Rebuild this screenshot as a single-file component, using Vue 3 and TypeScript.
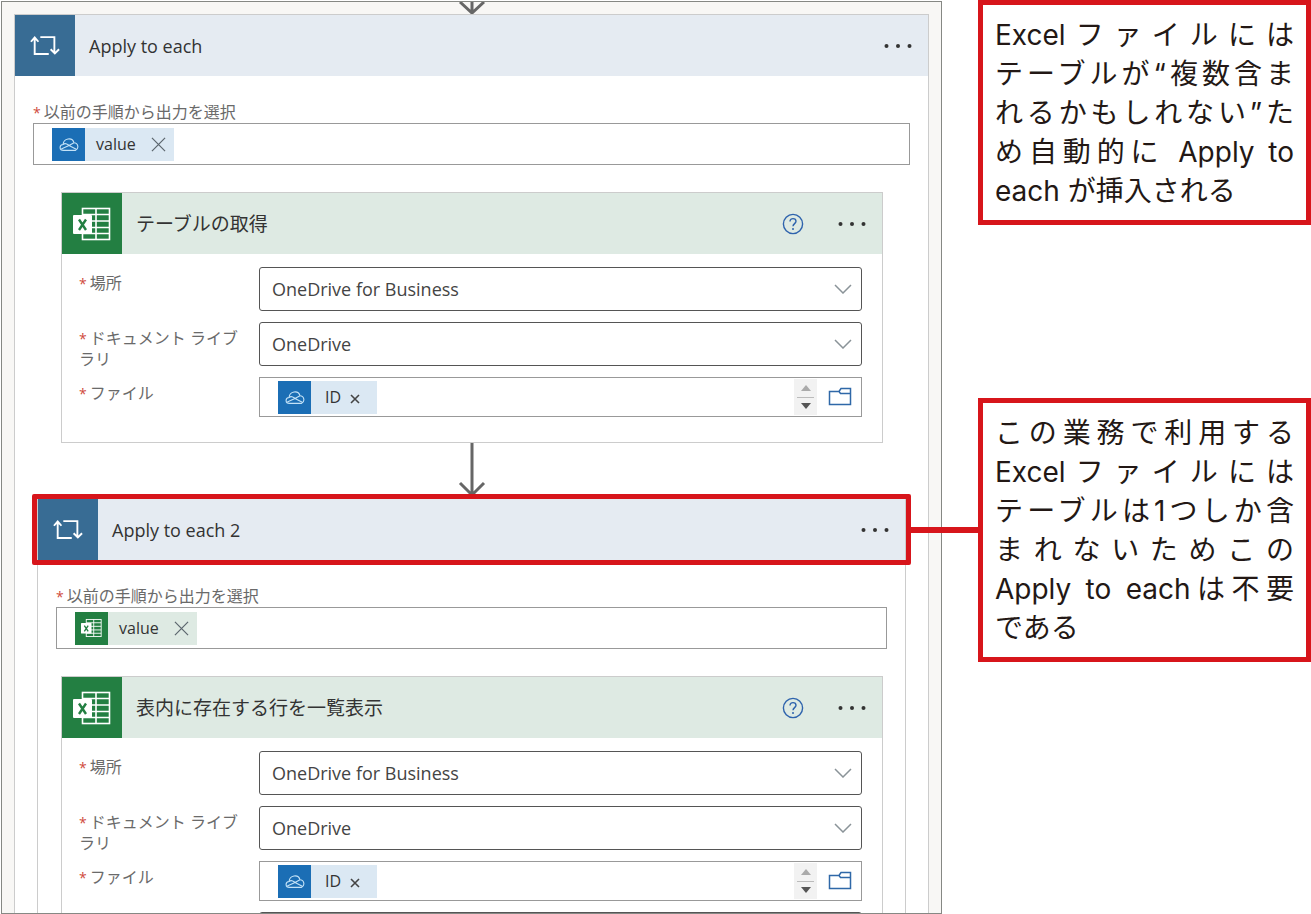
<script setup lang="ts">
interface Field {
  id: string
  label: string
  kind: 'select' | 'file'
  value: string
}

const baseFields = (prefix: string): Field[] => [
  { id: `${prefix}-location`, label: '場所', kind: 'select', value: 'OneDrive for Business' },
  { id: `${prefix}-library`, label: 'ドキュメント ライブラリ', kind: 'select', value: 'OneDrive' },
  { id: `${prefix}-file`, label: 'ファイル', kind: 'file', value: 'ID' },
]

const getTables: Field[] = baseFields('tables')
const listRows: Field[] = baseFields('rows')

const notes: string[][] = [
  ['Excelファイルには', 'テーブルが“複数含ま', 'れるかもしれない”た', 'め自動的に Apply to', 'each が挿入される'],
  ['この業務で利用する', 'Excelファイルには', 'テーブルは1つしか含', 'まれないためこの', 'Apply to eachは不要', 'である'],
]
</script>

<template>
  <svg class="defs" aria-hidden="true">
    <symbol id="i-loop" viewBox="0 0 32 24">
      <g fill="none" stroke="#fff" stroke-width="2">
        <path d="M5 3.500V21H20M1 8l4-4.500 4 4.500" />
        <path d="M11 3H26V20M22 16l4.500 4.500L31 16" />
      </g>
    </symbol>
    <symbol id="i-excel" viewBox="0 0 38 34">
      <g fill="none" stroke="#fff" stroke-width="1.600">
        <rect x="9.500" y="1.500" width="27" height="31" />
        <path d="M23 1.500V32.500M9.500 7.500H36.500M9.500 14H36.500M9.500 20.500H36.500M9.500 26.500H36.500" />
      </g>
      <rect x="0" y="8" width="19" height="19" rx="1" fill="#fff" />
      <path d="M6 12.500l7 10.500M13 12.500L6 23" stroke="#237f42" stroke-width="2.400" fill="none" />
    </symbol>
    <symbol id="i-cloud" viewBox="0 0 22 16">
      <g fill="none" stroke="#c3e2f7" stroke-width="1.200" stroke-linejoin="round">
        <path d="M5 14.500C0 14.500 0 8.500 4.500 8C5 1 14.500-.5 16.500 6C21 6 22.500 12.500 18 14.500Z" />
        <path d="M4.500 8C7 5.500 9 7.500 11 9L19.500 13.500M2.500 13L11 9L16.500 6" />
      </g>
    </symbol>
    <symbol id="i-folder" viewBox="0 0 24 20">
      <path d="M1.500 4.500H11L13 1.500H22.500V17.500H1.500ZM11 4.500L12.500 6.500H22.500" fill="none" stroke="#2f68a8" stroke-width="1.500" />
    </symbol>
    <symbol id="i-close" viewBox="0 0 16 16">
      <path d="M1 1L15 15M15 1L1 15" fill="none" stroke="#5c666e" stroke-width="1.300" />
    </symbol>
    <symbol id="i-close-small" viewBox="0 0 10 10">
      <path d="M1 1L9 9M9 1L1 9" fill="none" stroke="#444" stroke-width="1.600" />
    </symbol>
    <symbol id="i-help" viewBox="0 0 22 22">
      <circle cx="11" cy="11" r="9.600" fill="none" stroke="#2e63ad" stroke-width="1.400" />
      <path d="M8 8.500C8 4.500 14 4.800 14 8.300C14 10.500 11 10.800 11 13.300" fill="none" stroke="#2e63ad" stroke-width="1.400" />
      <circle cx="11" cy="16" r="1" fill="#2e63ad" />
    </symbol>
    <symbol id="i-more" viewBox="0 0 28 6">
      <circle cx="2.500" cy="3" r="2" fill="#333" />
      <circle cx="14" cy="3" r="2" fill="#333" />
      <circle cx="25.500" cy="3" r="2" fill="#333" />
    </symbol>
  </svg>

  <main class="page">
    <section class="flow">
      <svg class="arrow-in" viewBox="0 0 28 12" aria-hidden="true">
        <path d="M14 0V10M2 0L14 11L26 0" />
      </svg>

      <article class="scope">
        <header class="head">
          <span class="badge loop"><svg class="loop-icon"><use href="#i-loop" /></svg></span>
          <h2>Apply to each</h2>
          <button class="plain more" type="button" aria-label="メニュー"><svg><use href="#i-more" /></svg></button>
        </header>
        <div class="scope-body">
          <label class="caption" for="each-1"><b>*</b>以前の手順から出力を選択</label>
          <div class="tokens">
            <span class="chip blue">
              <span class="chip-icon"><svg class="cloud"><use href="#i-cloud" /></svg></span>
              <span class="chip-text">value</span>
              <button class="plain close" type="button" aria-label="削除"><svg><use href="#i-close" /></svg></button>
            </span>
            <input id="each-1" type="text" />
          </div>

          <article class="action">
            <header class="head green">
              <span class="badge excel"><svg class="excel-icon"><use href="#i-excel" /></svg></span>
              <h3>テーブルの取得</h3>
              <button class="plain help" type="button" aria-label="ヘルプ"><svg><use href="#i-help" /></svg></button>
              <button class="plain more" type="button" aria-label="メニュー"><svg><use href="#i-more" /></svg></button>
            </header>
            <div class="fields">
              <div v-for="f in getTables" :key="f.id" class="row">
                <label :for="f.id"><b>*</b>{{ f.label }}</label>
                <div v-if="f.kind === 'select'" class="select">
                  <select :id="f.id"><option>{{ f.value }}</option></select>
                  <svg viewBox="0 0 18 10" aria-hidden="true"><path d="M1 1L9 9L17 1" /></svg>
                </div>
                <div v-else class="file">
                  <span class="chip blue small">
                    <span class="chip-icon"><svg class="cloud"><use href="#i-cloud" /></svg></span>
                    <span class="chip-text">{{ f.value }}</span>
                    <button class="plain close" type="button" aria-label="削除"><svg><use href="#i-close-small" /></svg></button>
                  </span>
                  <input :id="f.id" type="text" />
                  <span class="spin">
                    <button class="plain" type="button" aria-label="上へ"><i class="up"></i></button>
                    <button class="plain" type="button" aria-label="下へ"><i class="down"></i></button>
                  </span>
                  <button class="plain folder" type="button" aria-label="フォルダー"><svg><use href="#i-folder" /></svg></button>
                </div>
              </div>
            </div>
          </article>

          <svg class="arrow" viewBox="0 0 28 55" aria-hidden="true">
            <path d="M14 0V52M2 40L14 52L26 40" />
          </svg>

          <article class="scope nested">
            <header class="head marked">
              <span class="badge loop"><svg class="loop-icon"><use href="#i-loop" /></svg></span>
              <h2>Apply to each 2</h2>
              <button class="plain more" type="button" aria-label="メニュー"><svg><use href="#i-more" /></svg></button>
            </header>
            <div class="scope-body">
              <label class="caption" for="each-2"><b>*</b>以前の手順から出力を選択</label>
              <div class="tokens">
                <span class="chip mint">
                  <span class="chip-icon"><svg class="sheet"><use href="#i-excel" /></svg></span>
                  <span class="chip-text">value</span>
                  <button class="plain close" type="button" aria-label="削除"><svg><use href="#i-close" /></svg></button>
                </span>
                <input id="each-2" type="text" />
              </div>

              <article class="action">
                <header class="head green">
                  <span class="badge excel"><svg class="excel-icon"><use href="#i-excel" /></svg></span>
                  <h3>表内に存在する行を一覧表示</h3>
                  <button class="plain help" type="button" aria-label="ヘルプ"><svg><use href="#i-help" /></svg></button>
                  <button class="plain more" type="button" aria-label="メニュー"><svg><use href="#i-more" /></svg></button>
                </header>
                <div class="fields">
                  <div v-for="f in listRows" :key="f.id" class="row">
                    <label :for="f.id"><b>*</b>{{ f.label }}</label>
                    <div v-if="f.kind === 'select'" class="select">
                      <select :id="f.id"><option>{{ f.value }}</option></select>
                      <svg viewBox="0 0 18 10" aria-hidden="true"><path d="M1 1L9 9L17 1" /></svg>
                    </div>
                    <div v-else class="file">
                      <span class="chip blue small">
                        <span class="chip-icon"><svg class="cloud"><use href="#i-cloud" /></svg></span>
                        <span class="chip-text">{{ f.value }}</span>
                        <button class="plain close" type="button" aria-label="削除"><svg><use href="#i-close-small" /></svg></button>
                      </span>
                      <input :id="f.id" type="text" />
                      <span class="spin">
                        <button class="plain" type="button" aria-label="上へ"><i class="up"></i></button>
                        <button class="plain" type="button" aria-label="下へ"><i class="down"></i></button>
                      </span>
                      <button class="plain folder" type="button" aria-label="フォルダー"><svg><use href="#i-folder" /></svg></button>
                    </div>
                  </div>
                  <div class="row">
                    <span></span>
                    <div class="select"><select aria-label="テーブル"></select></div>
                  </div>
                </div>
              </article>
            </div>
          </article>
        </div>
      </article>
    </section>

    <aside class="notes">
      <p v-for="(note, n) in notes" :key="n" class="note" :class="{ linked: n === 1 }">
        <span v-for="line in note" :key="line">{{ line }}</span>
      </p>
    </aside>
  </main>
</template>

<style>
body {
  background: #fff;
}
</style>

<style scoped>
* {
  box-sizing: border-box;
}

.defs {
  position: absolute;
  width: 0;
  height: 0;
}

svg {
  display: block;
}

.page {
  display: grid;
  grid-template-columns: minmax(0, 1fr) 333px;
  gap: 36px;
  height: 100vh;
  padding-left: 1px;
  overflow: hidden;
  font-family: "Open Sans", "Noto Sans CJK JP", sans-serif;
  color: #333;
}

.flow {
  display: flex;
  flex-direction: column;
  align-items: center;
  min-height: 0;
  margin-top: 1px;
  padding: 0 12px;
  overflow: hidden;
  border: 1px solid #868884;
  background: #f8f7f5;
}

.arrow-in,
.arrow {
  flex: none;
  fill: none;
  stroke: #666;
  stroke-width: 3;
}

.arrow-in {
  width: 28px;
  height: 12px;
}

.arrow {
  width: 28px;
  height: 55px;
  margin: 0 auto;
}

.scope {
  flex: none;
  width: 100%;
  border: 1px solid #ccc;
  background: #fff;
}

.scope.nested {
  width: auto;
  margin: 0 4px;
}

.scope-body {
  padding: 26px 18px;
}

.head {
  display: flex;
  align-items: center;
  height: 61px;
  padding-right: 16px;
  background: #e5ebf2;
}

.head.green {
  background: #deeae3;
}

.marked {
  position: relative;
}

.marked::after {
  content: "";
  position: absolute;
  inset: -5px -6px;
  border: 5px solid #d7151b;
  border-radius: 2px;
  pointer-events: none;
}

.badge {
  display: grid;
  place-items: center;
  width: 60px;
  height: 61px;
  margin-right: 14px;
}

.badge.loop {
  background: #386c94;
}

.badge.excel {
  background: #237f42;
}

.loop-icon {
  width: 30px;
  height: 23px;
}

.excel-icon {
  width: 38px;
  height: 34px;
}

h2,
h3 {
  flex: 1;
  margin: 0;
  font-size: 18px;
  font-weight: 400;
  line-height: 28px;
}

h3 {
  font-size: 19px;
}

.plain {
  display: grid;
  place-items: center;
  flex: none;
  margin: 0;
  padding: 0;
  border: 0;
  background: none;
}

.more svg {
  width: 28px;
  height: 6px;
}

.help {
  margin-right: 34px;
}

.help svg {
  width: 22px;
  height: 22px;
}

b {
  margin-right: 3px;
  color: #cf4a3c;
  font-size: 14px;
  font-weight: 400;
}

.caption,
.row label {
  color: #6a6a6a;
  font-size: 16px;
  font-weight: 400;
  line-height: 21px;
}

.caption {
  display: block;
}

.tokens {
  display: flex;
  align-items: center;
  height: 42px;
  padding-left: 18px;
  border: 1px solid #999;
}

.tokens input,
.file input {
  flex: 1;
  min-width: 0;
  border: 0;
  outline: 0;
  background: none;
}

.chip {
  display: flex;
  align-items: center;
  width: 122px;
  height: 33px;
}

.chip.small {
  width: 99px;
}

.chip.blue {
  background: #dbe8f3;
}

.chip.mint {
  background: #deeae3;
}

.chip-icon {
  display: grid;
  place-items: center;
  width: 33px;
  height: 33px;
  margin-right: 11px;
  background: #1b6eb5;
}

.mint .chip-icon {
  background: #237f42;
}

.small .chip-icon {
  margin-right: 14px;
}

.cloud {
  width: 20px;
  height: 15px;
}

.sheet {
  width: 21px;
  height: 20px;
}

.chip-text {
  font-size: 16px;
  line-height: 22px;
}

.close {
  margin-left: 15px;
}

.close svg {
  width: 15px;
  height: 15px;
}

.small .close {
  margin: 4px 0 0 9px;
}

.small .close svg {
  width: 10px;
  height: 10px;
}

.action {
  margin: 27px 27px 0 28px;
  border: 1px solid #ccc;
}

.nested .action {
  margin: 27px 4px 0 5px;
}

.fields {
  display: flex;
  flex-direction: column;
  gap: 11px;
  padding: 13px 20px 25px 17px;
}

.row {
  display: grid;
  grid-template-columns: 164px minmax(0, 1fr);
  gap: 16px;
  align-items: start;
}

.row label {
  height: 40px;
  padding-top: 6px;
}

.select {
  position: relative;
}

.select select {
  display: block;
  width: 100%;
  height: 44px;
  padding: 0 40px 0 12px;
  border: 1px solid #555;
  border-radius: 3px;
  appearance: none;
  background: #fff;
  color: #444;
  font-family: inherit;
  font-size: 18px;
}

.select svg {
  position: absolute;
  top: 17px;
  right: 10px;
  width: 18px;
  height: 10px;
  fill: none;
  stroke: #8a9398;
  stroke-width: 1.500;
  pointer-events: none;
}

.file {
  display: flex;
  align-items: center;
  height: 40px;
  padding: 0 9px 0 18px;
  border: 1px solid #999;
}

.spin {
  display: grid;
  width: 23px;
  height: 36px;
  margin-right: 11px;
  padding: 0 3px;
  background: #f2f2f2;
}

.spin button + button {
  border-top: 1px solid #bbb;
}

.spin i {
  width: 0;
  height: 0;
  border: 5px solid transparent;
}

.spin .up {
  border-top: 0;
  border-bottom: 6px solid #aaa;
}

.spin .down {
  border-top: 6px solid #555;
  border-bottom: 0;
}

.folder svg {
  width: 24px;
  height: 20px;
}

.notes {
  min-width: 0;
}

.note {
  position: relative;
  margin: 0;
  padding: 11px 12px 9px;
  border: 5px solid #d7151b;
  color: #231815;
  font-family: Inter, "Noto Sans CJK JP", sans-serif;
  font-size: 28px;
  font-weight: 400;
  line-height: 39px;
}

.note + .note {
  margin-top: 173px;
}

.note span {
  display: block;
  text-align: justify;
  text-align-last: justify;
  white-space: nowrap;
}

.note span:last-child {
  text-align-last: left;
}

/* leader line from the note to the highlighted header */
.linked::before {
  content: "";
  position: absolute;
  top: 124px;
  right: 100%;
  width: 72px;
  height: 6px;
  background: #d7151b;
}
</style>
